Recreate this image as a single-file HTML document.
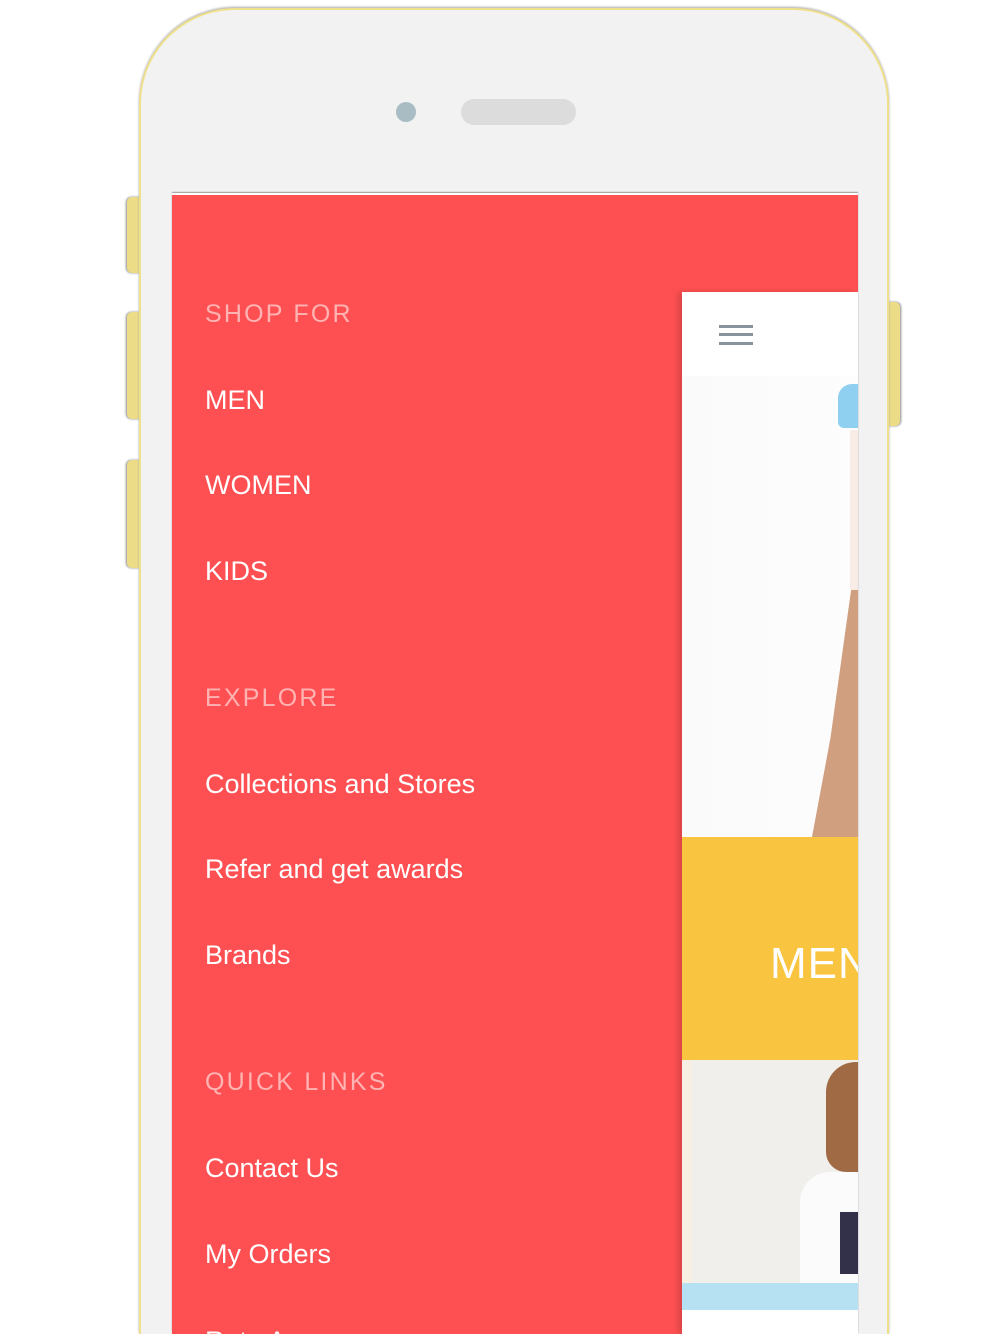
<!DOCTYPE html>
<html><head><meta charset="utf-8"><style>
*{margin:0;padding:0;box-sizing:border-box}
html{width:1000px;height:1334px;overflow:hidden}
body{width:1000px;height:1334px;background:#fff;position:relative;overflow:hidden;font-family:"Liberation Sans",sans-serif}
.a{position:absolute}
.btn{position:absolute;background:#ecdc88;border-radius:5px 0 0 5px;box-shadow:-1px 0 2px #888}
.phone{left:139px;top:8px;width:750px;height:1326px;background:#f2f2f2;border:2px solid #efe08c;border-bottom:0;border-radius:96px 96px 0 0;box-shadow:0 -1px 2px #aaa}
.screen{left:172px;top:193px;width:686px;height:1141px;background:#fe5052;border-top:2px solid #fff;box-shadow:0 -1px 1px #999}
.h{position:absolute;left:205px;font-size:25px;letter-spacing:2.2px;color:#ffb3b3;line-height:30px;white-space:nowrap}
.i{position:absolute;left:205px;font-size:27px;color:#fff;line-height:30px;white-space:nowrap}
</style></head><body>
<div class="btn" style="left:127px;top:197px;width:14px;height:76px"></div>
<div class="btn" style="left:127px;top:312px;width:14px;height:107px"></div>
<div class="btn" style="left:127px;top:460px;width:14px;height:108px"></div>
<div class="btn" style="left:887px;top:302px;width:13px;height:124px;border-radius:0 5px 5px 0;box-shadow:1px 0 2px #888"></div>
<div class="a phone"></div>
<div class="a" style="left:396px;top:102px;width:20px;height:20px;border-radius:50%;background:#a9bcc4"></div>
<div class="a" style="left:461px;top:99px;width:115px;height:26px;border-radius:13px;background:#dcdcdc"></div>
<div class="a screen"></div>
<div class="a" style="left:682px;top:292px;width:176px;height:1042px;background:#fff;box-shadow:-4px 0 6px rgba(0,0,0,.15)"></div>
<div class="a" style="left:682px;top:376px;width:176px;height:461px;background:linear-gradient(90deg,#fafafa,#fdfdfd)"></div>
<div class="a" style="left:838px;top:384px;width:20px;height:44px;background:#8fd0f0;border-radius:14px 0 0 6px"></div>
<div class="a" style="left:850px;top:430px;width:8px;height:160px;background:#f8ece6"></div>
<div class="a" style="left:812px;top:590px;width:46px;height:247px;background:#d09f80;clip-path:polygon(85% 0,100% 0,100% 100%,0 100%,40% 60%)"></div>
<div class="a" style="left:719px;top:325px;width:34px;height:3px;background:#8a949c"></div>
<div class="a" style="left:719px;top:333px;width:34px;height:3px;background:#8a949c"></div>
<div class="a" style="left:719px;top:342px;width:34px;height:3px;background:#8a949c"></div>
<div class="a" style="left:682px;top:837px;width:176px;height:223px;background:#f9c540;overflow:hidden">
<div class="a" style="left:88px;top:102px;font-size:44px;color:#fff;font-weight:300;line-height:50px;letter-spacing:1px;white-space:nowrap">MEN</div></div>
<div class="a" style="left:682px;top:1060px;width:176px;height:223px;background:#f0efeb"></div>
<div class="a" style="left:682px;top:1060px;width:10px;height:223px;background:#f6efe2"></div>
<div class="a" style="left:826px;top:1062px;width:32px;height:110px;background:#a06a45;border-radius:30px 0 0 20px"></div>
<div class="a" style="left:800px;top:1172px;width:58px;height:111px;background:#fbfbfb;border-radius:30px 0 0 0"></div>
<div class="a" style="left:840px;top:1212px;width:18px;height:62px;background:#33304a"></div>
<div class="a" style="left:682px;top:1283px;width:176px;height:27px;background:#b5e1f3"></div>
<div class="h" style="top:299px">SHOP FOR</div>
<div class="i" style="top:385px">MEN</div>
<div class="i" style="top:470px">WOMEN</div>
<div class="i" style="top:556px">KIDS</div>
<div class="h" style="top:683px">EXPLORE</div>
<div class="i" style="top:769px">Collections and Stores</div>
<div class="i" style="top:854px">Refer and get awards</div>
<div class="i" style="top:940px">Brands</div>
<div class="h" style="top:1067px">QUICK LINKS</div>
<div class="i" style="top:1153px">Contact Us</div>
<div class="i" style="top:1239px">My Orders</div>
<div class="a" style="left:205px;top:1316px;width:200px;height:18px;overflow:hidden"><div class="i" style="left:0;top:10px">Rate App</div></div>
</body></html>
